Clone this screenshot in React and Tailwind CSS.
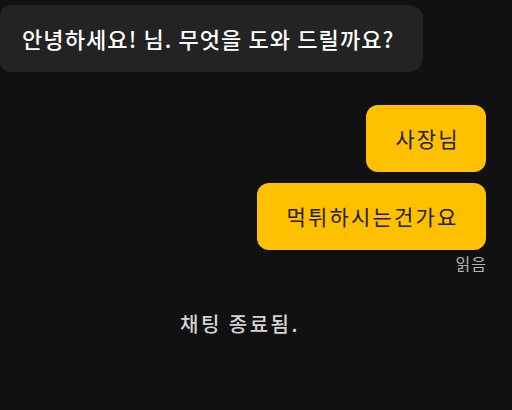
import React from "react";

const font = { fontFamily: '"Noto Sans CJK KR", "Noto Sans", sans-serif' };

const App = () => {
    return (
        <div
            className="w-[512px] h-[410px] bg-[#111111] overflow-hidden flex flex-col"
            style={font}
        >
            {/* BOT MESSAGE */}
            <div className="mt-[5px] w-[423px] h-[67px] bg-[#232323] rounded-r-[14px] rounded-l-[10px] flex items-center pl-[22px]">
                <p className="text-[22px] font-medium text-white tracking-[1.1px]">
                    안녕하세요! 님. 무엇을 도와 드릴까요?
                </p>
            </div>

            {/* USER MESSAGES */}
            <div className="flex flex-col items-end pr-[26px] mt-[33px] gap-[11px]">
                <div className="h-[67px] w-[120px] bg-[#FFC000] rounded-[12px] flex items-center justify-center pl-[3px]">
                    <p className="text-[21px] text-[#241d0c] tracking-[2px]">사장님</p>
                </div>
                <div className="h-[67px] w-[229px] bg-[#FFC000] rounded-[12px] flex items-center justify-center pl-[2px]">
                    <p className="text-[21px] text-[#241d0c] tracking-[2.2px]">먹튀하시는건가요</p>
                </div>
            </div>
            <p className="self-end pr-[25px] mt-[3px] text-[16px] text-[#b5b5b5] leading-5 tracking-[1px]">
                읽음
            </p>

            {/* END NOTICE */}
            <p className="mt-[36px] pl-[180px] text-[20px] font-medium text-[#d4d4d4] tracking-[2.5px]">
                채팅 종료됨.
            </p>
        </div>
    );
};

export default App;
